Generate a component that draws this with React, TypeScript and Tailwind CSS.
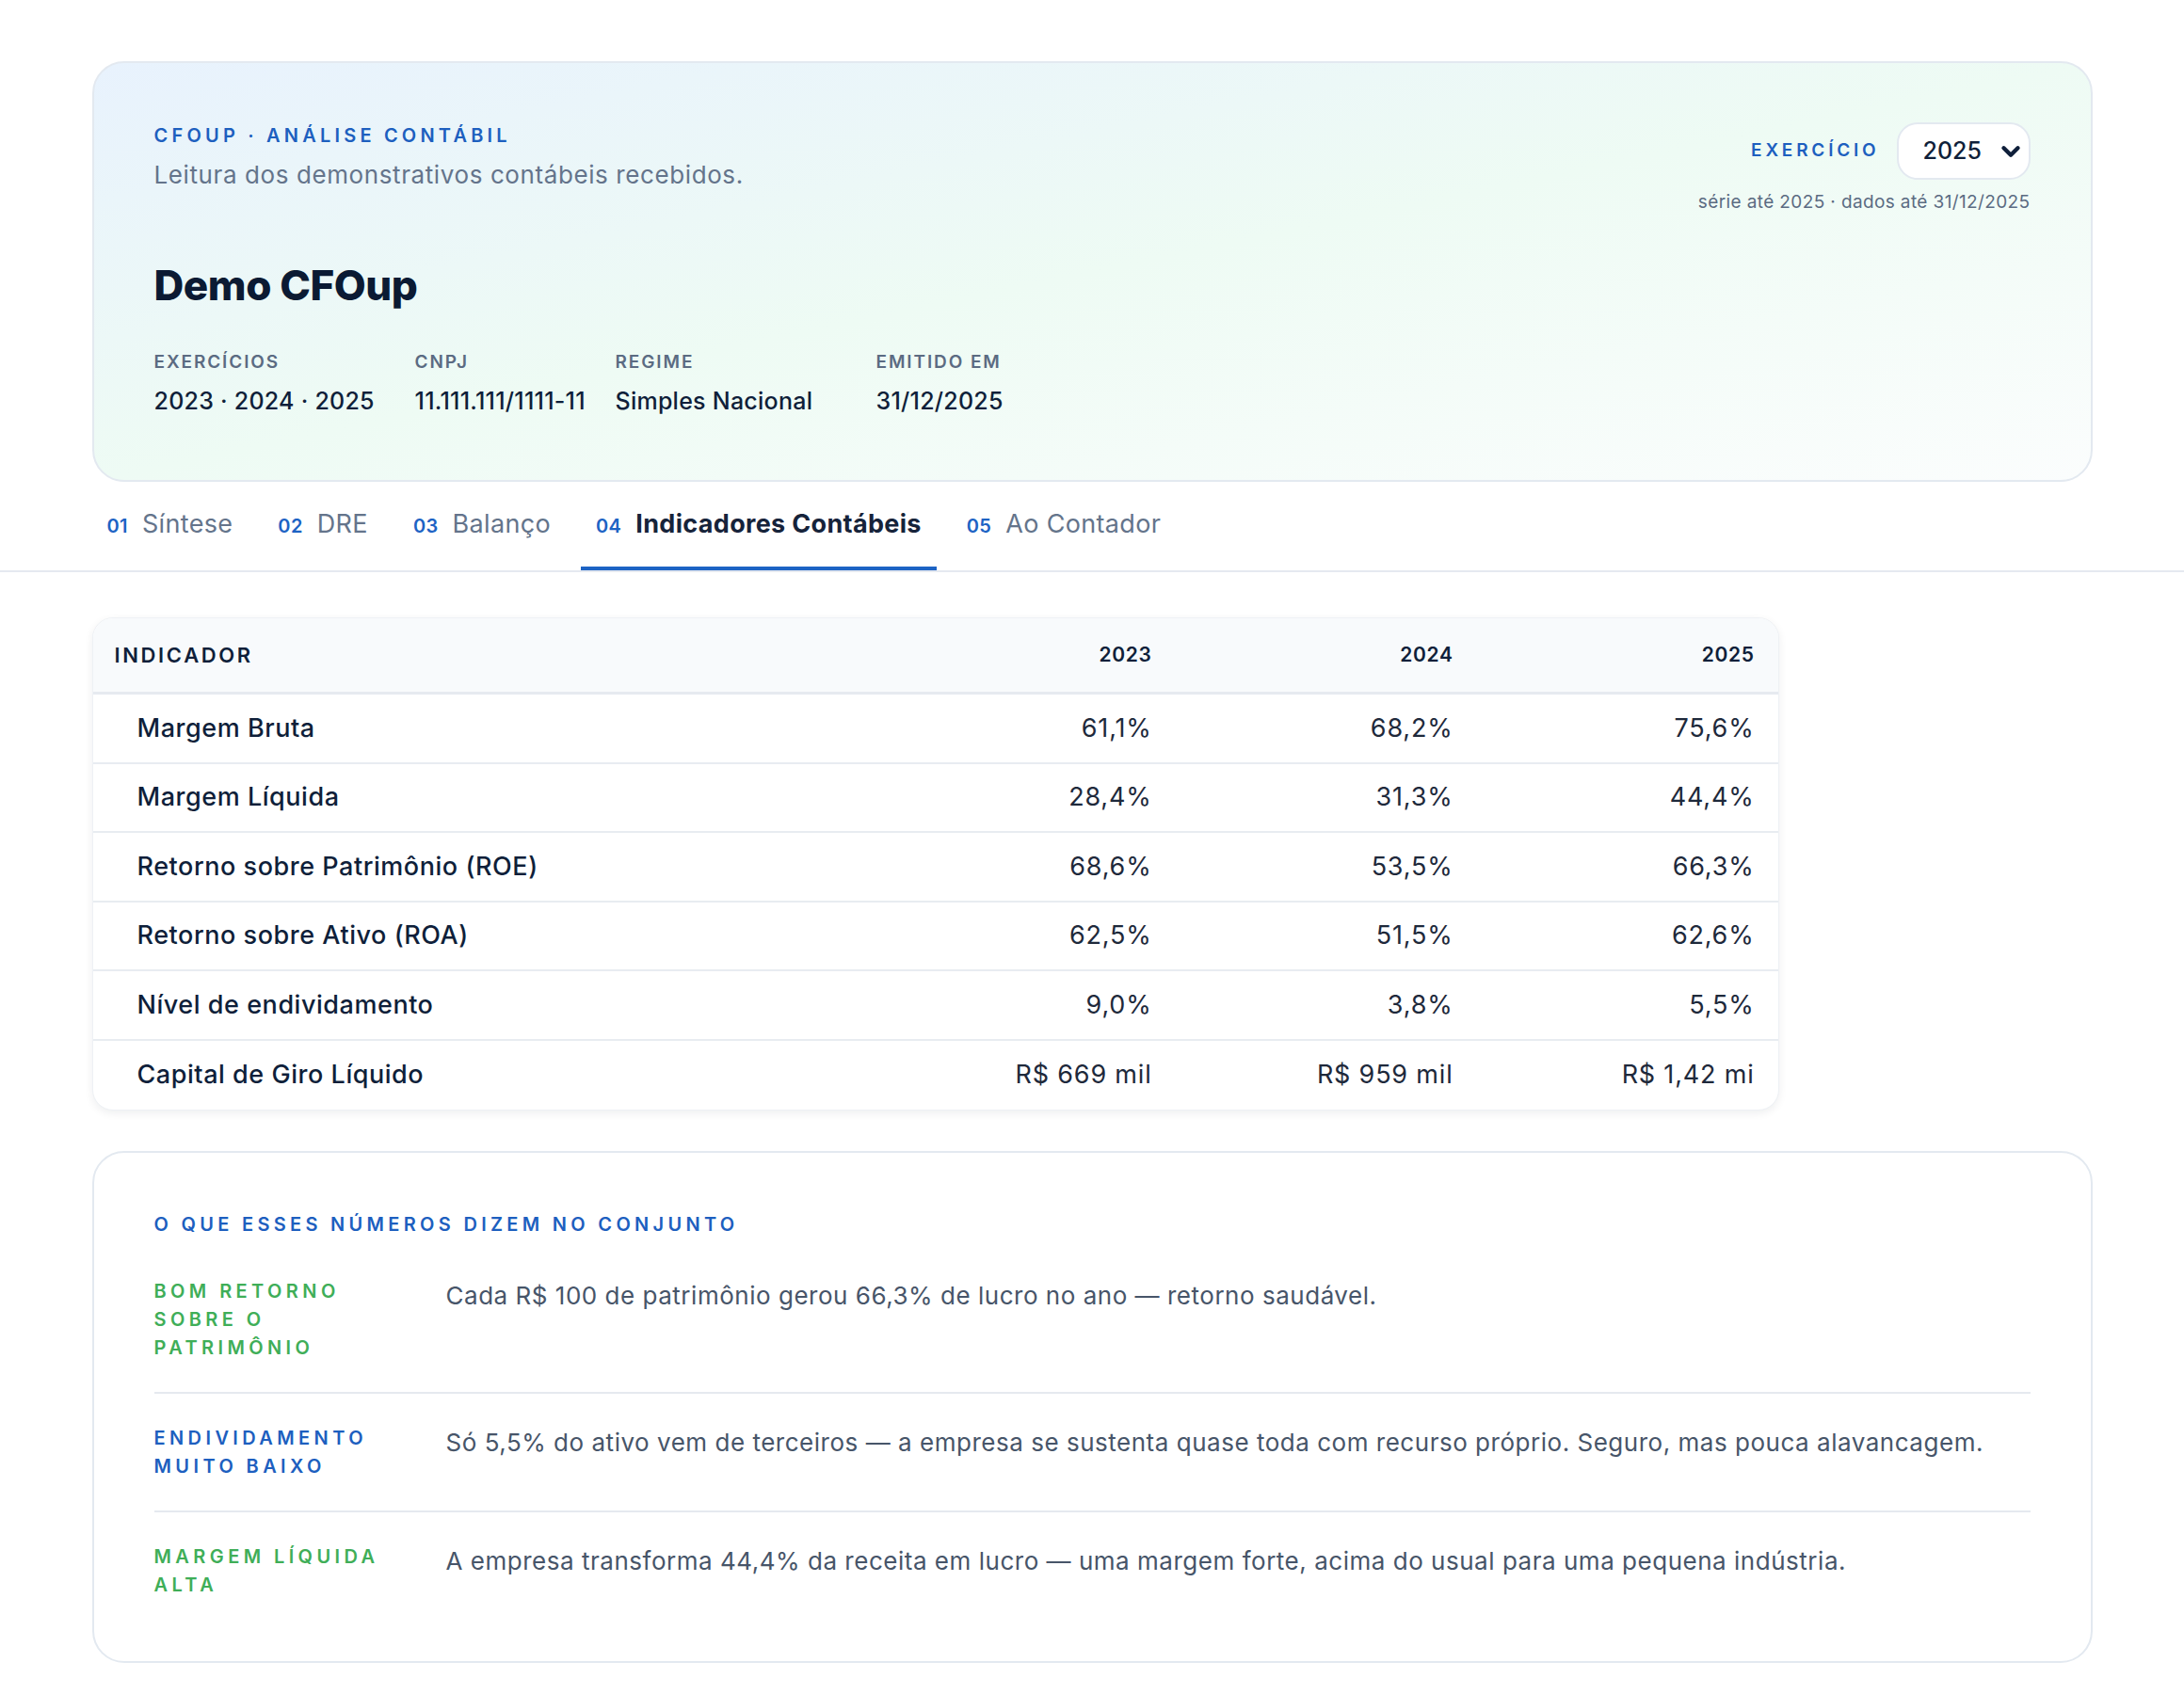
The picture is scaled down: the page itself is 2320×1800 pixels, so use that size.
import React from 'react';
import { ChevronDown } from 'lucide-react';

type Row = { label: string; values: [string, string, string] };

const rows: Row[] = [
  { label: 'Margem Bruta', values: ['61,1%', '68,2%', '75,6%'] },
  { label: 'Margem Líquida', values: ['28,4%', '31,3%', '44,4%'] },
  { label: 'Retorno sobre Patrimônio (ROE)', values: ['68,6%', '53,5%', '66,3%'] },
  { label: 'Retorno sobre Ativo (ROA)', values: ['62,5%', '51,5%', '62,6%'] },
  { label: 'Nível de endividamento', values: ['9,0%', '3,8%', '5,5%'] },
  { label: 'Capital de Giro Líquido', values: ['R$ 669 mil', 'R$ 959 mil', 'R$ 1,42 mi'] },
];

const tabs = [
  { n: '01', label: 'Síntese' },
  { n: '02', label: 'DRE' },
  { n: '03', label: 'Balanço' },
  { n: '04', label: 'Indicadores Contábeis', active: true },
  { n: '05', label: 'Ao Contador' },
];

const meta = [
  { label: 'EXERCÍCIOS', value: '2023 · 2024 · 2025' },
  { label: 'CNPJ', value: '11.111.111/1111-11' },
  { label: 'REGIME', value: 'Simples Nacional' },
  { label: 'EMITIDO EM', value: '31/12/2025' },
];

const insights = [
  {
    title: 'BOM RETORNO SOBRE O PATRIMÔNIO',
    tone: 'text-[#3fae58]',
    text: 'Cada R$ 100 de patrimônio gerou 66,3% de lucro no ano — retorno saudável.',
  },
  {
    title: 'ENDIVIDAMENTO MUITO BAIXO',
    tone: 'text-[#1d5fbf]',
    text: 'Só 5,5% do ativo vem de terceiros — a empresa se sustenta quase toda com recurso próprio. Seguro, mas pouca alavancagem.',
  },
  {
    title: 'MARGEM LÍQUIDA ALTA',
    tone: 'text-[#3fae58]',
    text: 'A empresa transforma 44,4% da receita em lucro — uma margem forte, acima do usual para uma pequena indústria.',
  },
];

const Header: React.FC = () => (
  <div className="rounded-[34px] border-2 border-[#e3e9f0] bg-linear-to-br from-[#e8f2fd] via-[#eefbf4] to-[#fbfdfd] px-[64px] pt-[63px] pb-[67px]">
    <div className="flex items-start justify-between">
      <div>
        <div className="text-[20px] leading-[28px] font-semibold tracking-[0.21em] text-[#1d5fbf]">
          CFOUP · ANÁLISE CONTÁBIL
        </div>
        <div className="mt-[10px] text-[26px] leading-[36px] tracking-[0.023em] text-[#64748b]">
          Leitura dos demonstrativos contábeis recebidos.
        </div>
        <h1 className="mt-[72px] text-[44px] leading-[54px] font-extrabold tracking-[-0.01em] text-[#0b1a33]">Demo CFOup</h1>
        <div className="mt-[42px] grid grid-cols-[277px_213px_277px_auto]">
          {meta.map(m => (
            <div key={m.label}>
              <div className="text-[19px] leading-[26px] font-semibold tracking-[0.1em] text-[#5b6b82]">{m.label}</div>
              <div className="mt-[11px] text-[25px] leading-[34px] font-medium tracking-[0.01em] text-[#0f1f3a]">{m.value}</div>
            </div>
          ))}
        </div>
      </div>
      <div className="flex flex-col items-end">
        <div className="flex items-center gap-[18px]">
          <span className="text-[19px] font-semibold tracking-[0.2em] text-[#1d5fbf]">EXERCÍCIO</span>
          <div className="flex h-[61px] w-[142px] items-center justify-between rounded-[22px] border-2 border-[#e3e9f0] bg-white pl-[26px] pr-[4px]">
            <span className="text-[25px] font-medium text-[#0f1f3a]">2025</span>
            <ChevronDown size={30} strokeWidth={3.5} className="text-[#0f1f3a]" />
          </div>
        </div>
        <div className="mt-[11px] text-[19px] leading-[26px] tracking-[0.02em] text-[#5b6b82]">série até 2025 · dados até 31/12/2025</div>
      </div>
    </div>
  </div>
);

const Tabs: React.FC = () => (
  <div className="border-b-2 border-[#e5e9f0]">
    <div className="mx-auto flex w-[2125px] gap-[16px]">
      {tabs.map(t => (
        <div
          key={t.n}
          className={`flex items-baseline gap-[15px] px-[16px] pt-[27px] pb-[27px] border-b-4 ${t.active ? 'border-[#1d63c4]' : 'border-transparent'}`}
        >
          <span className="text-[20px] font-semibold tracking-[0.02em] text-[#1d63c4]">{t.n}</span>
          <span className={`text-[27px] leading-[36px] tracking-[0.012em] ${t.active ? 'font-bold text-[#16233a]' : 'text-[#64748b]'}`}>{t.label}</span>
        </div>
      ))}
    </div>
  </div>
);

const IndicatorTable: React.FC = () => (
  <div className="w-[1792px] overflow-hidden rounded-[22px] border border-[#eef1f5] bg-white shadow-[0_3px_10px_rgba(15,23,42,0.07)]">
    <div className="grid h-[81px] grid-cols-[1fr_320px_320px_320px] items-center border-b-[3px] border-[#e6eaf0] bg-[#f8fafc] font-semibold text-[#0f1f3a]">
      <div className="pl-[23px] text-[22px] tracking-[0.12em]">INDICADOR</div>
      <div className="pr-[25px] text-right text-[21px] tracking-[0.03em]">2023</div>
      <div className="pr-[25px] text-right text-[21px] tracking-[0.03em]">2024</div>
      <div className="pr-[25px] text-right text-[21px] tracking-[0.03em]">2025</div>
    </div>
    {rows.map((r, i) => (
      <div
        key={r.label}
        className={`grid h-[73.5px] grid-cols-[1fr_320px_320px_320px] items-center text-[27px] ${i < rows.length - 1 ? 'border-b-2 border-[#e8ecf1]' : ''}`}
      >
        <div className="pl-[47px] font-medium tracking-[0.02em] text-[#0f1f3a]">{r.label}</div>
        {r.values.map((v, j) => (
          <div key={j} className="pr-[25px] text-right tracking-[0.03em] text-[#1e293b]">{v}</div>
        ))}
      </div>
    ))}
  </div>
);

const Insights: React.FC = () => (
  <div className="rounded-[34px] border-2 border-[#e3e9f0] bg-white px-[64px] pt-[62px] pb-[34px]">
    <div className="mb-[10px] text-[20px] leading-[28px] font-semibold tracking-[0.215em] text-[#1d5fbf]">
      O QUE ESSES NÚMEROS DIZEM NO CONJUNTO
    </div>
    {insights.map((ins, i) => (
      <div
        key={ins.title}
        className={`grid grid-cols-[270px_1fr] gap-x-[40px] py-[32px] ${i < insights.length - 1 ? 'border-b-2 border-[#e5e9ef]' : ''}`}
      >
        <div className={`text-[20px] leading-[30px] font-semibold tracking-[0.22em] ${ins.tone}`}>{ins.title}</div>
        <div className="mt-[2px] text-[26px] leading-[36px] tracking-[0.02em] text-[#475569]">{ins.text}</div>
      </div>
    ))}
  </div>
);

export default function App() {
  return (
    <div className="min-h-screen bg-white pt-[65px] pb-[35px] font-['Inter',sans-serif]">
      <div className="mx-auto w-[2125px]">
        <Header />
      </div>
      <Tabs />
      <div className="mx-auto w-[2125px] pt-[48px]">
        <IndicatorTable />
        <div className="mt-[43px]">
          <Insights />
        </div>
      </div>
    </div>
  );
}
